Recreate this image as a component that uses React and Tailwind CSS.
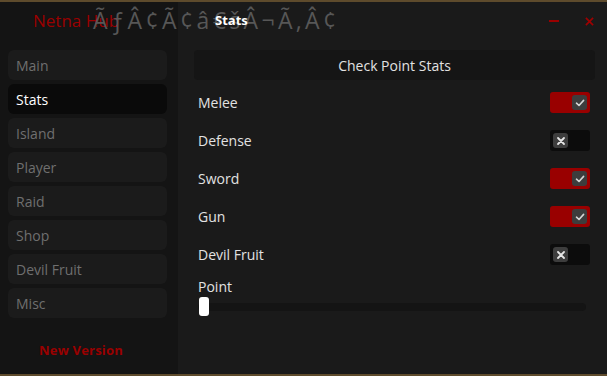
import React from "react";

const tabs = ["Main", "Stats", "Island", "Player", "Raid", "Shop", "Devil Fruit", "Misc"];

const stats = [
  { name: "Melee", on: true },
  { name: "Defense", on: false },
  { name: "Sword", on: true },
  { name: "Gun", on: true },
  { name: "Devil Fruit", on: false },
];

function Toggle({ on }) {
  return (
    <div
      className={`flex h-[21px] w-[40px] items-center rounded-[3px] px-[3px] ${
        on ? "justify-end bg-[#990000]" : "justify-start bg-[#0c0c0c]"
      }`}
    >
      <div className="flex h-[15px] w-[15px] items-center justify-center rounded-[3px] bg-[#3d3d3d]">
        {on ? (
          <svg width="10" height="10" viewBox="0 0 10 10">
            <path d="M1.5 5.2 L4 7.5 L8.6 2.4" fill="none" stroke="#d6d6d6" strokeWidth="1.6" strokeLinecap="round" strokeLinejoin="round" />
          </svg>
        ) : (
          <svg width="10" height="10" viewBox="0 0 10 10">
            <path d="M2 2 L8 8 M8 2 L2 8" fill="none" stroke="#e6e6e6" strokeWidth="1.8" strokeLinecap="round" />
          </svg>
        )}
      </div>
    </div>
  );
}

export default function App() {
  return (
    <div className="relative flex h-[376px] w-[607px] flex-col overflow-hidden bg-[#1a1a1a] font-['Open_Sans',sans-serif]">
      {/* top border */}
      <div className="h-[2px] bg-[#5e4b2c]" />

      {/* header */}
      <div className="flex h-[38px]">
        <div className="flex w-[178px] items-center bg-[#141414] pl-[33px] text-[17px] text-[#9a0000]">
          Netna Hub
        </div>
        <div className="flex flex-1 items-center bg-[#1a1a1a] pl-[37px] pr-[13px]">
          <span className="z-10 text-[13px] font-bold text-white">Stats</span>
          <div className="ml-auto flex items-center gap-[26px] text-[#9a0000]">
            <span className="block h-[2px] w-[10px] bg-[#9a0000]" />
            <svg width="9" height="9" viewBox="0 0 10 10">
              <path d="M1 1 L9 9 M9 1 L1 9" stroke="#a00000" strokeWidth="1.8" />
            </svg>
          </div>
        </div>
      </div>

      {/* garbled title text overlapping the header */}
      <span className="absolute left-[93px] top-[4px] whitespace-nowrap text-[23px] leading-[32px] tracking-[3.4px] text-[#575757]">
        ÃƒÂ¢Ã¢â€šÂ¬Ã‚Â¢
      </span>

      {/* body */}
      <div className="flex flex-1">
        <div className="flex w-[178px] flex-col bg-[#141414] px-[8px] pt-[10px]">
          <div className="flex flex-col gap-[4px] pr-[3px]">
            {tabs.map((t) => (
              <div
                key={t}
                className={`flex h-[30px] items-center rounded-[6px] pl-[8px] text-[14px] ${
                  t === "Stats" ? "bg-[#0a0a0a] text-white" : "bg-[#1b1b1b] text-[#6f6f6f]"
                }`}
              >
                {t}
              </div>
            ))}
          </div>
          <div className="mt-[23px] pl-[31px] text-[13px] font-bold tracking-[0.2px] text-[#9a0000]">
            New Version
          </div>
        </div>

        <div className="flex flex-1 flex-col pl-[16px] pr-[12px] pt-[10px]">
          <div className="flex h-[30px] items-center justify-center rounded-[4px] bg-[#151515] text-[14px] text-[#e2e2e2]">
            Check Point Stats
          </div>
          <div className="mt-[12px] flex flex-col gap-[17px] pl-[4px] pr-[5px]">
            {stats.map((s) => (
              <div key={s.name} className="flex h-[21px] items-center justify-between">
                <span className="text-[14px] text-[#e2e2e2]">{s.name}</span>
                <Toggle on={s.on} />
              </div>
            ))}
          </div>
          <div className="mt-[14px] pl-[4px] text-[14px] leading-[16px] text-[#e2e2e2]">Point</div>
          <div className="relative mt-[8px] ml-[4px] mr-[9px] h-[8px] rounded-full bg-[#141414]">
            <div className="absolute left-[1px] top-[-6px] h-[19px] w-[10px] rounded-[3px] bg-white" />
          </div>
        </div>
      </div>

      {/* bottom border */}
      <div className="h-[2px] bg-[#5e4b2c]" />
    </div>
  );
}
